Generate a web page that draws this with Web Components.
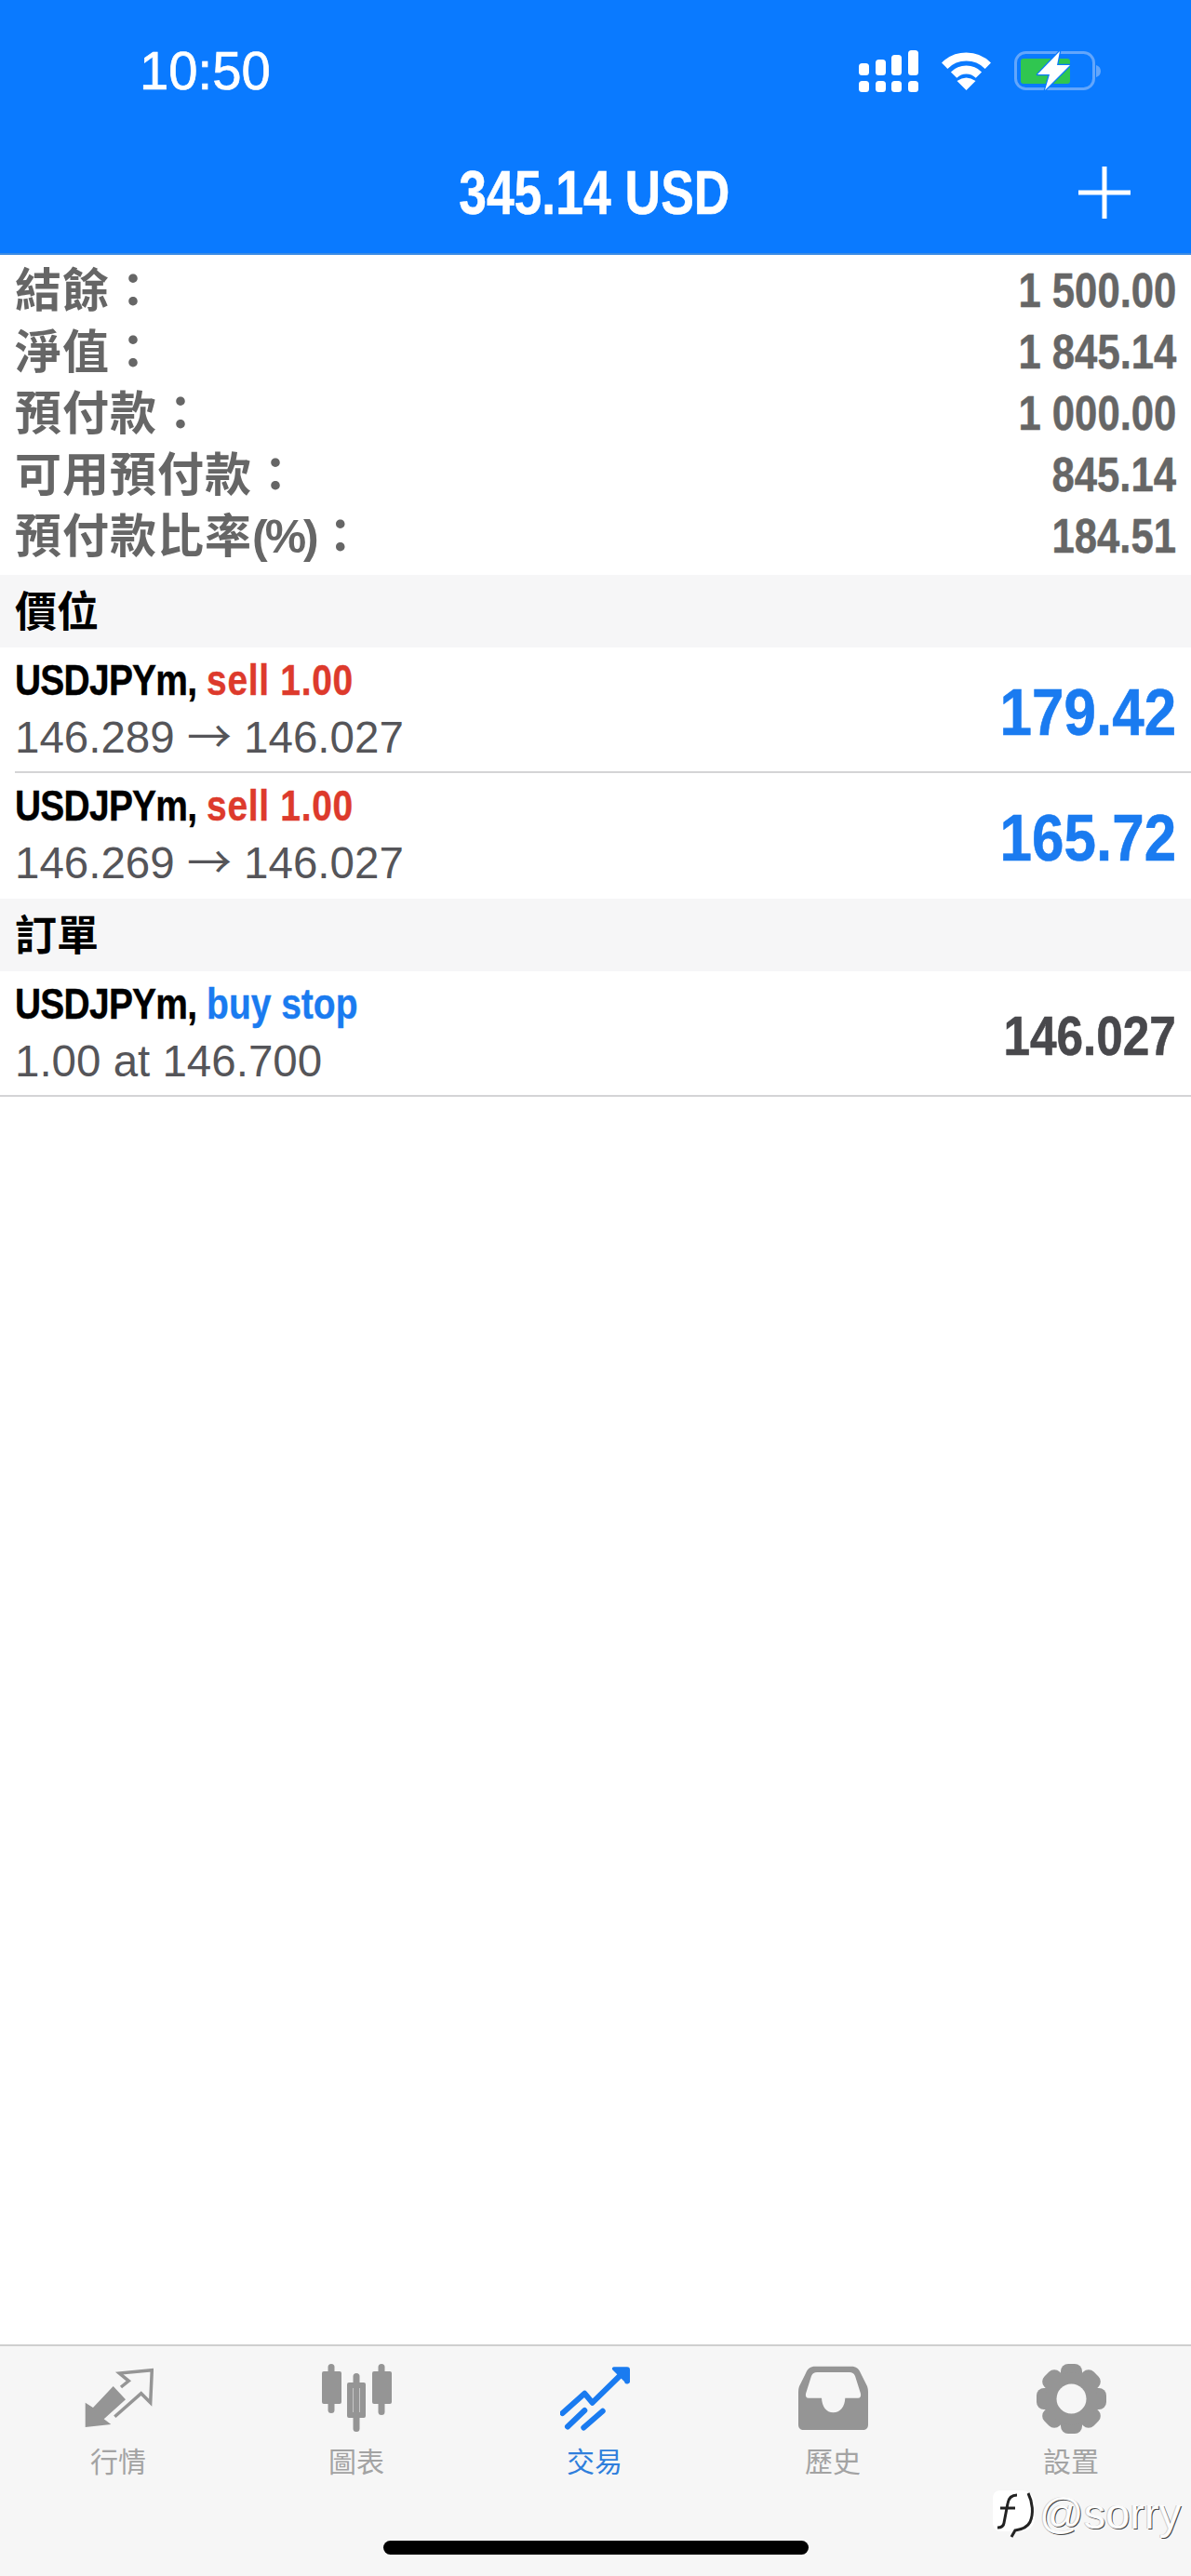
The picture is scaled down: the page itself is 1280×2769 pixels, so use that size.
<!DOCTYPE html>
<html lang="zh-Hant">
<head>
<meta charset="utf-8">
<title>交易</title>
<style>
  html, body { margin: 0; padding: 0; background: #fff; }
  body { font-family: "Liberation Sans", "Noto Sans CJK TC", sans-serif; }
  #app { display: flex; flex-direction: column; height: 2769px; position: relative; overflow: hidden; }
  #content { flex: 1; }
</style>
</head>
<body>
<div id="app">
  <status-bar time="10:50"></status-bar>
  <nav-bar title="345.14 USD"></nav-bar>
  <div id="content">
    <account-summary>
      <summary-row label="結餘：" value="1 500.00"></summary-row>
      <summary-row label="淨值：" value="1 845.14"></summary-row>
      <summary-row label="預付款：" value="1 000.00"></summary-row>
      <summary-row label="可用預付款：" value="845.14"></summary-row>
      <summary-row label="預付款比率<span class='pct'>(%)</span>：" value="184.51"></summary-row>
    </account-summary>
    <section-head>價位</section-head>
    <trade-row symbol="USDJPYm," action="sell 1.00" kind="sell" from="146.289" to="146.027" value="179.42" inset></trade-row>
    <trade-row symbol="USDJPYm," action="sell 1.00" kind="sell" from="146.269" to="146.027" value="165.72" noline></trade-row>
    <section-head>訂單</section-head>
    <trade-row symbol="USDJPYm," action="buy stop" kind="buy" detail="1.00 at 146.700" value="146.027" pending></trade-row>
  </div>
  <tab-bar>
    <tab-item icon="market" label="行情"></tab-item>
    <tab-item icon="chart" label="圖表"></tab-item>
    <tab-item icon="trade" label="交易" active></tab-item>
    <tab-item icon="history" label="歷史"></tab-item>
    <tab-item icon="settings" label="設置"></tab-item>
  </tab-bar>
  <water-mark></water-mark>
</div>

<script>
  class StatusBar extends HTMLElement {
    connectedCallback() {
      this.attachShadow({ mode: "open" }).innerHTML = `
        <style>
          :host { display: flex; height: 152px; box-sizing: border-box; padding: 0 97px 0 150px;
            align-items: center; justify-content: space-between; background: #0a7aff; color: #fff; }
          .time { font: 400 58px/1 "Liberation Sans", sans-serif; -webkit-text-stroke: .7px #fff; transform: scaleX(.97); transform-origin: left center; }
          .icons { display: flex; gap: 23px; align-items: center; }
          svg { display: block; }
        </style>
        <div class="time">${this.getAttribute("time")}</div>
        <div class="icons">
          <svg width="64" height="45" viewBox="0 0 64 45" fill="#fff">
            <rect x="0" y="14" width="11" height="13" rx="3.5"/><rect x="18" y="10" width="11" height="17" rx="3.5"/>
            <rect x="35" y="5" width="11" height="22" rx="3.5"/><rect x="53" y="0" width="11" height="27" rx="3.5"/>
            <rect x="0" y="33" width="11" height="12" rx="3.5"/><rect x="18" y="33" width="11" height="12" rx="3.5"/>
            <rect x="35" y="33" width="11" height="12" rx="3.5"/><rect x="53" y="33" width="11" height="12" rx="3.5"/>
          </svg>
          <svg width="57" height="41" viewBox="0 0 57 41" fill="none" stroke="#fff" stroke-width="9">
            <path d="M5.2 14.7A33 33 0 0 1 51.8 14.7"/>
            <path d="M15.1 24.6A19 19 0 0 1 41.9 24.6"/>
            <path d="M28.5 41L18.500 31Q28.5 24 38.500 31Z" fill="#fff" stroke="none"/>
          </svg>
          <svg width="93" height="42" viewBox="0 0 93 42">
            <rect x="1.5" y="1.5" width="84" height="39" rx="11" fill="none" stroke="#63a6fb" stroke-width="3"/>
            <path d="M88 15c3 1 5 3 5 6.500s-2 5.500-5 6.500z" fill="#63a6fb"/>
            <rect x="7" y="8" width="53" height="27" rx="3" fill="#30c650"/>
            <path d="M49 0L25 25H38L33 42L60 15H46Z" fill="#fff" stroke="#0a7aff" stroke-width="2.500" paint-order="stroke" stroke-linejoin="round"/>
          </svg>
        </div>`;
    }
  }

  class NavBar extends HTMLElement {
    connectedCallback() {
      this.attachShadow({ mode: "open" }).innerHTML = `
        <style>
          :host { display: grid; grid-template-columns: 1fr auto 1fr; height: 122px; box-sizing: border-box;
            padding: 0 65px 10px; align-items: center; background: #0a7aff; color: #fff;
            border-bottom: 2px solid #3b8be3; }
          .title { font: 700 66px/1 "Liberation Sans", sans-serif; transform: scaleX(.81); white-space: nowrap; -webkit-text-stroke: .5px #fff; margin-left: -3px; }
          .add { justify-self: end; display: block; }
        </style>
        <span></span>
        <div class="title">${this.getAttribute("title")}</div>
        <svg class="add" width="56" height="56" viewBox="0 0 56 56" fill="#fff">
          <rect x="25.500" y="0" width="5" height="56"/><rect x="0" y="25.500" width="56" height="5"/>
        </svg>`;
    }
  }

  class AccountSummary extends HTMLElement {
    connectedCallback() {
      this.attachShadow({ mode: "open" }).innerHTML = `
        <style>:host { display: block; padding: 5px 0 9px; }</style>
        <slot></slot>`;
    }
  }

  class SummaryRow extends HTMLElement {
    connectedCallback() {
      this.attachShadow({ mode: "open" }).innerHTML = `
        <style>
          :host { display: flex; height: 66px; padding: 0 16px; align-items: center; justify-content: space-between; color: #666; }
          .label { margin-top: 2px; font: 700 50px/66px "Liberation Sans", "Noto Sans CJK TC", sans-serif; letter-spacing: 1px; }
          .pct { letter-spacing: -3px; margin-right: 1px; }
          .value { margin-top: -1px; font: 700 52px/66px "Liberation Sans", sans-serif; -webkit-text-stroke: .5px #666; transform: scaleX(.84); transform-origin: right center; white-space: nowrap; }
        </style>
        <div class="label">${this.getAttribute("label")}</div>
        <div class="value">${this.getAttribute("value")}</div>`;
    }
  }

  class SectionHead extends HTMLElement {
    connectedCallback() {
      this.attachShadow({ mode: "open" }).innerHTML = `
        <style>
          :host { display: block; height: 78px; box-sizing: border-box; padding: 3px 0 0 16px; background: #f6f6f7;
            color: #000; font: 700 45px/75px "Liberation Sans", "Noto Sans CJK TC", sans-serif; }
        </style>
        <slot></slot>`;
    }
  }

  class TradeRow extends HTMLElement {
    connectedCallback() {
      const pending = this.hasAttribute("pending");
      const line = this.hasAttribute("noline") ? "none" : "2px solid #d4d4d6";
      const sell = this.getAttribute("kind") === "sell";
      const valueColor = pending ? "#48484c" : "#1a7bf0";
      const detail = this.hasAttribute("detail")
        ? this.getAttribute("detail")
        : `${this.getAttribute("from")} <span class="arrow">→</span> ${this.getAttribute("to")}`;
      this.attachShadow({ mode: "open" }).innerHTML = `
        <style>
          :host { display: block; position: relative; height: 135px; box-sizing: border-box; padding: 4px 16px 0; }
          .wrap { display: flex; justify-content: space-between; align-items: center; height: 125px; }
          .top { margin-top: -2px; font: 700 46px/62px "Liberation Sans", sans-serif; transform: scaleX(.847); transform-origin: left center; white-space: nowrap; color: #000; -webkit-text-stroke: .4px currentColor; }
          .symbol { letter-spacing: -.9px; }
          .kind { color: ${sell ? "#dd3a2c" : "#1a7bf0"}; letter-spacing: ${sell ? ".8px" : "0"}; }
          .detail { font: 400 47.5px/62px "Liberation Sans", sans-serif; color: #555559; white-space: nowrap; }
          .arrow { font: 400 48px/1 "Noto Sans CJK TC", sans-serif; }
          .value { margin-top: 6px; font: 700 ${pending ? 60 : 70}px/1 "Liberation Sans", sans-serif; color: ${valueColor};
            -webkit-text-stroke: .6px ${valueColor};
            transform: scaleX(${pending ? .855 : .885}); transform-origin: right center; white-space: nowrap; }
          .rule { position: absolute; right: 0; bottom: 0; left: ${this.hasAttribute("inset") ? "16px" : "0"}; border-bottom: ${line}; }
        </style>
        <div class="wrap">
          <div>
            <div class="top"><span class="symbol">${this.getAttribute("symbol")}</span> <span class="kind">${this.getAttribute("action")}</span></div>
            <div class="detail">${detail}</div>
          </div>
          <div class="value">${this.getAttribute("value")}</div>
        </div>
        <div class="rule"></div>`;
    }
  }

  class TabBar extends HTMLElement {
    connectedCallback() {
      this.attachShadow({ mode: "open" }).innerHTML = `
        <style>
          :host { display: block; height: 249px; box-sizing: border-box; padding-top: 19px; background: #f6f6f6; border-top: 2px solid #cfcfcf; }
          .tabs { display: grid; grid-template-columns: repeat(5, 1fr); height: 190px; }
          .home { width: 457px; height: 15px; margin: 0 auto 0 412px; border-radius: 8px; background: #000; }
        </style>
        <div class="tabs"><slot></slot></div>
        <div class="home"></div>`;
    }
  }

  const TAB_ICONS = {
    market: `<path d="M1.700 68V41.700L10 47L31.700 24L45 38.300L21.700 59.300L29.300 65Z" fill="currentColor"/>
      <path d="M33.300 56.700L61.700 31.700L71.700 41.700L73.300 6.700L38.300 10L48.300 18.300L40 25" fill="none" stroke="currentColor" stroke-width="3.500"/>`,
    chart: `<g fill="currentColor">
      <rect x="6.500" y="0" width="7" height="53" rx="3.500"/><rect x="0" y="8" width="21" height="35" rx="2"/>
      <rect x="33.500" y="10" width="7" height="63" rx="3.500"/><path fill-rule="evenodd" d="M29 20H45a2 2 0 0 1 2 2V56a2 2 0 0 1-2 2H29a2 2 0 0 1-2-2V22a2 2 0 0 1 2-2ZM33 26V52H41V26Z"/>
      <rect x="60.500" y="0" width="7" height="55" rx="3.500"/><rect x="54" y="8" width="21" height="35" rx="2"/></g>`,
    trade: `<g fill="none" stroke="currentColor" stroke-width="6" stroke-linecap="round" stroke-linejoin="round">
      <path d="M2.500 53L26.300 31.700L34.700 41.700L66 11"/><path d="M8 67.500L26.300 50"/><path d="M25.300 68.500L45.700 50.700"/></g>
      <path d="M58 3.300H72a3 3 0 0 1 3 3V18a3 3 0 0 1-6 1L56 6a2 2 0 0 1 2-2.700Z" fill="currentColor"/>`,
    history: `<path fill="currentColor" fill-rule="evenodd" d="M18 2.700H57C62 2.700 65 5 67 10L74 24C74.700 26 75 28 75 30V65C75 69 73 71 69 71H6C2 71 0 69 0 65V30C0 28 .3 26 1 24L8 10C10 5 13 2.700 18 2.700ZM20 9C17 9 15.500 10 14 13L8 32C7.500 35 8.500 36.700 11 36.700H25C25.500 46 30 52.300 37.600 52.300C45 52.300 50 46 50.300 36.700H64C66.500 36.700 67.500 35 67 32L61 13C59.500 10 58 9 55 9Z"/>`,
    settings: `<g fill="currentColor">${[0, 45, 90, 135, 180, 225, 270, 315].map(a =>
        `<rect x="26" y="0" width="23" height="24" rx="8" transform="rotate(${a} 37.500 37.500)"/>`).join("")}
      <circle cx="37.500" cy="37.500" r="28"/></g><circle cx="37.500" cy="37.500" r="16" fill="#f6f6f6"/>`
  };

  class TabItem extends HTMLElement {
    connectedCallback() {
      const color = this.hasAttribute("active") ? "#1a7bf0" : "#959595";
      const text = this.hasAttribute("active") ? "#2f7fdc" : "#a3a3a3";
      this.attachShadow({ mode: "open" }).innerHTML = `
        <style>
          :host { display: flex; flex-direction: column; align-items: center; }
          svg { display: block; color: ${color}; margin-left: -2px; }
          .label { margin-top: 10px; margin-left: -2px; font: 400 30px/36px "Noto Sans CJK TC", sans-serif; color: ${text}; }
        </style>
        <svg width="75" height="75" viewBox="0 0 75 75">${TAB_ICONS[this.getAttribute("icon")]}</svg>
        <div class="label">${this.getAttribute("label")}</div>`;
    }
  }

  class WaterMark extends HTMLElement {
    connectedCallback() {
      this.attachShadow({ mode: "open" }).innerHTML = `
        <style>
          :host { position: absolute; left: 1067px; top: 2677px; display: flex; align-items: center; gap: 4px; height: 50px; }
          .text { font: 400 47px/50px "Liberation Sans", sans-serif; color: #fdfdfd; text-shadow: 1px 1px 0 #444, -1px 0 0 #ccc; white-space: nowrap; }
          svg { display: block; }
        </style>
        <svg width="46" height="52" viewBox="0 0 46 52">
          <path d="M9 1H30C39 1 45 7 45 16V30C45 39 39 45 30 45H9C3 45 0 41 0 35V10C0 4 3 1 9 1Z" fill="#fff"/>
          <path d="M26 6C20 6 17 9 16 15L12 36C11.500 40 9 41 5 41M8 20H24" fill="none" stroke="#222" stroke-width="3"/>
          <path d="M38 4C43 14 44 26 40 35C37 41 31 43 24 44L20 51" fill="none" stroke="#222" stroke-width="3"/>
        </svg>
        <div class="text">@sorry</div>`;
    }
  }

  customElements.define("status-bar", StatusBar);
  customElements.define("nav-bar", NavBar);
  customElements.define("account-summary", AccountSummary);
  customElements.define("summary-row", SummaryRow);
  customElements.define("section-head", SectionHead);
  customElements.define("trade-row", TradeRow);
  customElements.define("tab-bar", TabBar);
  customElements.define("tab-item", TabItem);
  customElements.define("water-mark", WaterMark);
</script>
</body>
</html>
